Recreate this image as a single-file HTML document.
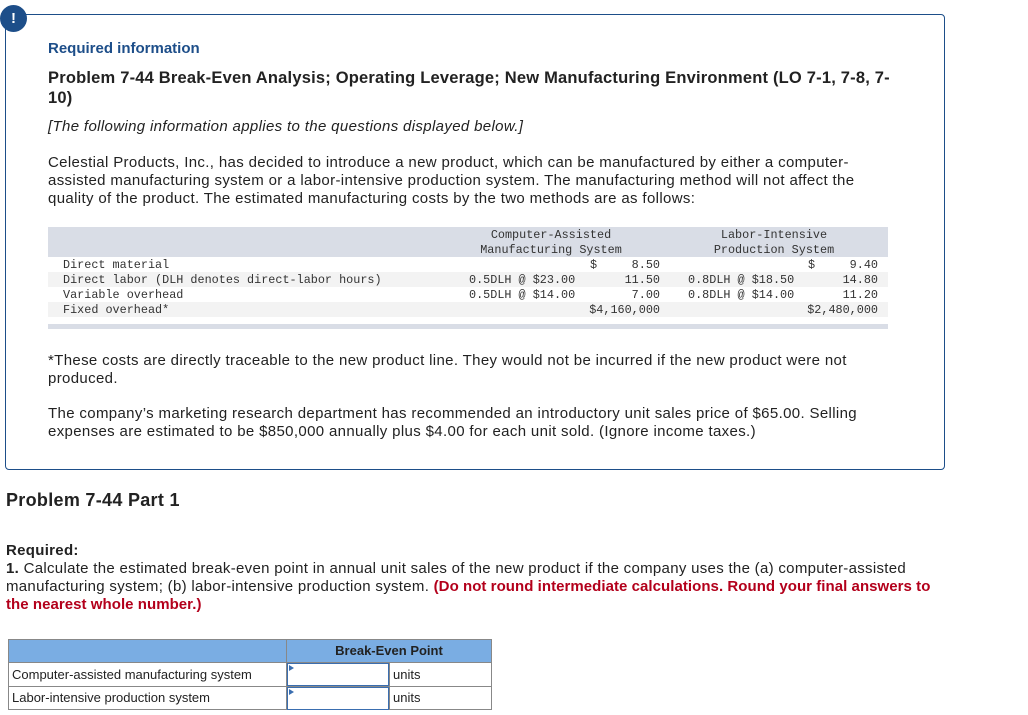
<!DOCTYPE html>
<html><head><meta charset="utf-8">
<style>
body{margin:0;width:1028px;height:715px;background:#fff;position:relative;font-family:"Liberation Sans",sans-serif;color:#222;overflow:hidden}
.a{position:absolute;white-space:nowrap}
.t{font-size:15px;line-height:18px;letter-spacing:0.35px}
.m{font-family:"Liberation Mono",monospace;font-size:11.8px;line-height:15px;color:#333}
.r{text-align:right}
.red{color:#b3001b;letter-spacing:0.05px}
</style></head><body>
<div class="a" style="left:5px;top:14px;width:938px;height:454px;border:1px solid #1d4e89;border-radius:4px"></div>
<div class="a" style="left:0;top:5px;width:27px;height:27px;border-radius:50%;background:#1d4e89;color:#fff;font-weight:bold;font-size:15px;line-height:27px;text-align:center">!</div>
<div class="a" style="left:48px;top:40px;color:#1d4e89;font-weight:bold;font-size:15px;line-height:18px">Required information</div>
<div class="a" style="left:48px;top:68px;font-weight:bold;font-size:16.5px;line-height:20px;letter-spacing:0.2px">Problem 7-44 Break-Even Analysis; Operating Leverage; New Manufacturing Environment (LO 7-1, 7-8, 7-<br>10)</div>
<div class="a t" style="left:48px;top:118px;font-style:italic">[The following information applies to the questions displayed below.]</div>
<div class="a t" style="left:48px;top:154px">Celestial Products, Inc., has decided to introduce a new product, which can be manufactured by either a computer-<br>assisted manufacturing system or a labor-intensive production system. The manufacturing method will not affect the<br>quality of the product. The estimated manufacturing costs by the two methods are as follows:</div>

<div class="a" style="left:48px;top:227px;width:840px;height:30px;background:#d9dde6"></div>
<div class="a" style="left:48px;top:272px;width:840px;height:15px;background:#f3f3f3"></div>
<div class="a" style="left:48px;top:302px;width:840px;height:15px;background:#f3f3f3"></div>
<div class="a" style="left:48px;top:324px;width:840px;height:5px;background:#d9dde6"></div>

<div class="a m" style="left:451px;top:228px;width:200px;text-align:center">Computer-Assisted<br>Manufacturing System</div>
<div class="a m" style="left:674px;top:228px;width:200px;text-align:center">Labor-Intensive<br>Production System</div>
<div class="a m" style="left:63px;top:258px">Direct material<br>Direct labor (DLH denotes direct-labor hours)<br>Variable overhead<br>Fixed overhead*</div>
<div class="a m" style="left:469px;top:273px">0.5DLH @ $23.00<br>0.5DLH @ $14.00</div>
<div class="a m" style="left:590px;top:258px">$</div>
<div class="a m r" style="left:560px;top:258px;width:100px">8.50<br>11.50<br>7.00<br>$4,160,000</div>
<div class="a m" style="left:688px;top:273px">0.8DLH @ $18.50<br>0.8DLH @ $14.00</div>
<div class="a m" style="left:808px;top:258px">$</div>
<div class="a m r" style="left:778px;top:258px;width:100px">9.40<br>14.80<br>11.20<br>$2,480,000</div>

<div class="a t" style="left:48px;top:352px">*These costs are directly traceable to the new product line. They would not be incurred if the new product were not<br>produced.</div>
<div class="a t" style="left:48px;top:405px">The company’s marketing research department has recommended an introductory unit sales price of $65.00. Selling<br>expenses are estimated to be $850,000 annually plus $4.00 for each unit sold. (Ignore income taxes.)</div>

<div class="a" style="left:6px;top:490px;font-weight:bold;font-size:18px;line-height:20px;letter-spacing:0.3px">Problem 7-44 Part 1</div>
<div class="a t" style="left:6px;top:542px;letter-spacing:0.3px"><b>Required:</b><br><b>1.</b> Calculate the estimated break-even point in annual unit sales of the new product if the company uses the (a) computer-assisted<br>manufacturing system; (b) labor-intensive production system. <b class="red">(Do not round intermediate calculations. Round your final answers to</b><br><b class="red">the nearest whole number.)</b></div>

<div class="a" style="left:8px;top:639px;width:484px;height:71px;border:1px solid #888;box-sizing:border-box"></div>
<div class="a" style="left:9px;top:640px;width:482px;height:22px;background:#7aade3"></div>
<div class="a" style="left:286px;top:640px;width:1px;height:70px;background:#888"></div>
<div class="a" style="left:9px;top:662px;width:482px;height:1px;background:#888"></div>
<div class="a" style="left:9px;top:686px;width:482px;height:1px;background:#888"></div>
<div class="a" style="left:287px;top:640px;width:204px;font-weight:bold;font-size:13px;line-height:22px;text-align:center;color:#222">Break-Even Point</div>
<div class="a" style="left:287px;top:663px;width:102px;height:23px;border:1px solid #3a6eb0;box-sizing:border-box"></div>
<div class="a" style="left:287px;top:687px;width:102px;height:23px;border:1px solid #3a6eb0;box-sizing:border-box"></div>
<div class="a" style="left:389px;top:663px;width:1px;height:47px;background:#888"></div>
<div class="a" style="left:289px;top:665px;border-left:5px solid #3a6eb0;border-top:3px solid transparent;border-bottom:3px solid transparent"></div>
<div class="a" style="left:289px;top:689px;border-left:5px solid #3a6eb0;border-top:3px solid transparent;border-bottom:3px solid transparent"></div>
<div class="a" style="left:12px;top:667px;font-size:13px;line-height:16px">Computer-assisted manufacturing system</div>
<div class="a" style="left:12px;top:690px;font-size:13px;line-height:16px">Labor-intensive production system</div>
<div class="a" style="left:393px;top:667px;font-size:13px;line-height:16px">units</div>
<div class="a" style="left:393px;top:690px;font-size:13px;line-height:16px">units</div>
</body></html>
